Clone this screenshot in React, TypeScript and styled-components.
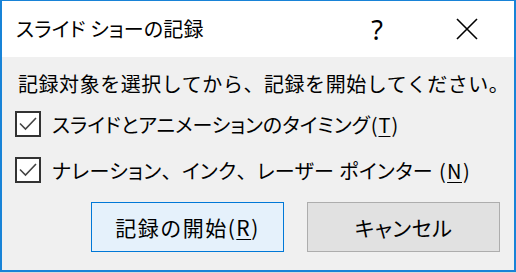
import React from 'react'
import styled, { createGlobalStyle } from 'styled-components'

const GlobalStyle = createGlobalStyle`
  html, body {
    margin: 0;
    padding: 0;
    background: #d9d9d9;
  }
  body {
    font-family: "Noto Sans CJK JP", "Noto Sans", sans-serif;
    color: #000;
  }
`

const Window = styled.div`
  box-sizing: border-box;
  width: 516px;
  height: 272px;
  border: 2px solid #1883d7;
  border-top-width: 1px;
  display: flex;
  flex-direction: column;
  background: #f0f0f0;
`

const TitleBar = styled.div`
  height: 56px;
  flex: none;
  background: #fff;
  display: flex;
  align-items: center;
  padding-left: 14px;
`

const Title = styled.div`
  flex: 1;
  font-size: 20px;
  font-feature-settings: 'palt';
  letter-spacing: 0.2px;
  margin-top: -2px;
`

const TitleButton = styled.div<{ $w: number }>`
  width: ${({ $w }) => $w}px;
  height: 100%;
  display: flex;
  align-items: center;
  justify-content: center;
  font-size: 27px;
  font-family: "Noto Sans", sans-serif;
`

const Body = styled.div`
  flex: 1;
  padding: 13px 14px 0 16px;
  display: flex;
  flex-direction: column;
`

const Instruction = styled.div`
  font-size: 20px;
  line-height: 28px;
  height: 28px;
  letter-spacing: 0.55px;
  white-space: nowrap;
`

const CheckRow = styled.label<{ $spacing?: number }>`
  display: flex;
  align-items: center;
  height: 40px;
  margin-top: 6px;
  gap: 11px;
  font-size: 20px;
  font-feature-settings: 'palt';
  letter-spacing: ${({ $spacing = 0 }) => $spacing}px;
  white-space: nowrap;
`

const Box = styled.span`
  box-sizing: border-box;
  width: 26px;
  height: 26px;
  border: 2px solid #333;
  background: #fff;
  display: flex;
  align-items: center;
  justify-content: center;
  margin-left: -3px;
`

const Punct = styled.span`
  font-feature-settings: normal;
`

const Paren = styled.span`
  margin: 0 1px;
`

const Key = styled.span`
  text-decoration: underline;
  text-underline-offset: 3px;
  text-decoration-thickness: 1px;
`

const Buttons = styled.div`
  display: flex;
  justify-content: flex-end;
  gap: 23px;
  margin-top: 12px;
`

const Button = styled.button<{ $primary?: boolean }>`
  box-sizing: border-box;
  width: 193px;
  height: 50px;
  padding: 0;
  border: ${({ $primary }) => ($primary ? '1px solid #0078d7' : '1px solid #adadad')};
  background: ${({ $primary }) => ($primary ? '#e5f1fb' : '#e1e1e1')};
  font-family: inherit;
  font-size: 21px;
  font-feature-settings: ${({ $primary }) => ($primary ? 'normal' : "'palt'")};
  letter-spacing: ${({ $primary }) => ($primary ? '1.5px' : '0.5px')};
  color: #000;
`

function Check() {
  return (
    <Box>
      <svg width="20" height="16" viewBox="0 0 20 16">
        <path d="M2 7.5 L7.5 13 L18 2" fill="none" stroke="#444" strokeWidth="1.6" />
      </svg>
    </Box>
  )
}

export default function App() {
  return (
    <>
      <GlobalStyle />
      <Window>
        <TitleBar>
          <Title>スライド ショーの記録</Title>
          <TitleButton $w={46}>?</TitleButton>
          <TitleButton $w={46} style={{ marginLeft: 44, marginRight: 24 }}>
            <svg width="22" height="22" viewBox="0 0 22 22">
              <path d="M1 1 L21 21 M21 1 L1 21" stroke="#000" strokeWidth="1.6" />
            </svg>
          </TitleButton>
        </TitleBar>
        <Body>
          <Instruction>記録対象を選択してから、記録を開始してください。</Instruction>
          <CheckRow>
            <Check />
            <span>
              スライドとアニメーションのタイミング<Paren>(</Paren><Key>T</Key><Paren>)</Paren>
            </span>
          </CheckRow>
          <CheckRow $spacing={0.4}>
            <Check />
            <span>
              ナレーション<Punct>、</Punct>インク<Punct>、</Punct>レーザー ポインター <Paren>(</Paren>
              <Key>N</Key>
              <Paren>)</Paren>
            </span>
          </CheckRow>
          <Buttons>
            <Button $primary>
              記録の開始(<Key>R</Key>)
            </Button>
            <Button>キャンセル</Button>
          </Buttons>
        </Body>
      </Window>
    </>
  )
}
